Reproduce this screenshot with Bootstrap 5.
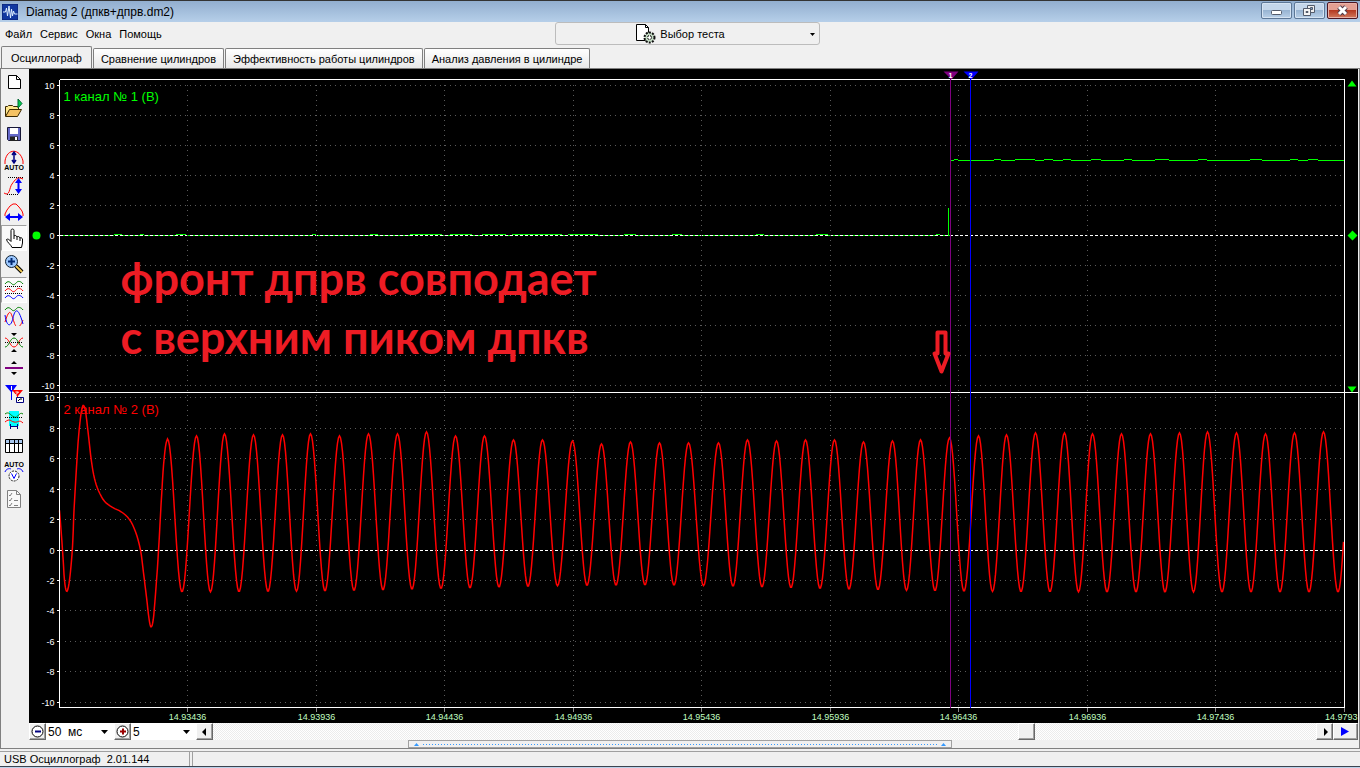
<!DOCTYPE html>
<html lang="ru">
<head>
<meta charset="utf-8">
<meta name="viewport" content="width=device-width, initial-scale=1">
<title>Diamag 2 (дпкв+дпрв.dm2)</title>
<link rel="stylesheet" href="https://cdn.jsdelivr.net/npm/bootstrap@5.3.0/dist/css/bootstrap.min.css">
<style>
:root { --face: #f0f0f0; --shade: #808080; }
body { font-family: "Liberation Sans", Arial, sans-serif; font-size: 11px; line-height: 14px; color: #000; background: var(--face); }
button, select { font: inherit; color: inherit; border-radius: 0; }
svg { display: block; }
.titlebar { height: 22px; padding: 0 2px; border-top: 1px solid #333; background: linear-gradient(#92aecf, #b6cfe9); font-size: 12px; }
.win-btns { gap: 2px; margin-bottom: 2px; }
.win-btn { width: 31px; height: 17px; padding: 0; border: 1px solid #5d7796; border-radius: 2px; background: linear-gradient(#c4d6ea 45%, #98b4d2 50%, #b9d0e8); box-shadow: inset 0 0 0 1px #d5e3f2; }
.win-close { border-color: #4c1622; background: linear-gradient(#e3a093 45%, #b53a22 50%, #d27a5e); box-shadow: inset 0 0 0 1px #e8b2a8; }
.menubar { display: grid; grid-template-columns: 555fr 265px 540fr; height: 24px; }
.menubar nav { padding-left: 5px; gap: 8px; }
.menubar a { color: #000; text-decoration: none; }
.test-btn { height: 23px; padding: 0 14px 0 0; border: 1px solid #bcbcbc; border-radius: 3px; background: var(--face); position: relative; }
.test-btn .arrow { position: absolute; right: 4px; top: 10px; }
.tabs { height: 22px; padding-left: 1px; border: 0; flex-wrap: nowrap; gap: 1px; }
.tabs .nav-link { height: 20px; padding: 0 7px; border: 1px solid var(--shade); border-bottom: 0; border-radius: 2px 2px 0 0; margin: 0; color: #000; background: linear-gradient(#fff, #e8e8e8); white-space: nowrap; line-height: 18px; }
.tabs .nav-link:hover { border-color: var(--shade); }
.tabs .nav-link.active { height: 23px; padding: 0 9px; border-color: var(--shade); background: var(--face); color: #000; margin-bottom: -1px; line-height: 20px; }
.pane { border: 1px solid var(--shade); min-height: 0; }
.work { min-height: 0; }
.toolbox { width: 28px; }
.tool { width: 26px; height: 26px; padding: 2px; border: 1px solid transparent; background: none; }
.tool.pressed { border-color: #a0a0a0 #fff #fff #a0a0a0; background: #fafafa; }
.scope { background: #000; min-height: 0; min-width: 0; margin-right: 1px; overflow: hidden; }
.scope svg { width: 100%; height: 100%; }
.scope text { font-family: "Liberation Sans", Arial, sans-serif; }
.t-axis { font-size: 9px; fill: #fff; text-anchor: end; }
.t-time { font-size: 9px; fill: #c0ffc0; text-anchor: middle; }
.t-time.t-last { text-anchor: end; }
.t-chan { font-size: 13px; }
.t-flag { font-size: 7px; font-weight: bold; fill: #fff; text-anchor: middle; }
.scope .t-note { font-family: Lato, "Open Sans", sans-serif; font-weight: bold; font-size: 45px; fill: #ed1c24; }
.t-auto { font: bold 7px "Liberation Sans", sans-serif; text-anchor: middle; }
.control-row { height: 17px; margin: 0 1px 0 28px; background: #fff; }
.raised { height: 17px; width: 17px; flex: none; padding: 0; border: 1px solid; border-color: #fff #696969 #696969 #fff; box-shadow: inset -1px -1px #a0a0a0; background: var(--face); }
.play { width: 25px; }
.pick { height: 17px; width: 68px; padding: 0 2px; border: 0; appearance: none; font-size: 12px; background: #fff url("data:image/svg+xml,%3Csvg xmlns='http://www.w3.org/2000/svg' width='7' height='4'%3E%3Cpath d='M0 0h7L3.5 4z'/%3E%3C/svg%3E") no-repeat right 6px center; }
.pick-narrow { width: 65px; }
.track { background: repeating-conic-gradient(#fff 0 25%, #ececec 0 50%) 0 0 / 2px 2px; }
.thumb { margin-left: 73%; }
.splitter { width: 40%; height: 8px; border: 1px solid #a0a0a0; padding: 0 5px; }
.splitter span { height: 1px; margin: 0 4px; background: repeating-linear-gradient(90deg, #3399ff 0 1px, transparent 1px 3px); }
.statusbar { height: 15px; margin-top: 2px; border-top: 1px solid #a0a0a0; }
.status-cell { width: 190px; border-right: 1px solid #a0a0a0; }
.status-rest { border-left: 1px solid #a0a0a0; margin-left: 2px; }
.desktop-edge { height: 2px; border-top: 1px solid #3c4450; background: #bcd2ea; }
</style>
</head>
<body>
<div class="d-flex flex-column vh-100 overflow-hidden">
  <header class="titlebar d-flex align-items-center flex-shrink-0">
    <svg width="16" height="16" viewBox="0 0 16 16" class="me-2"><rect width="16" height="16" fill="#1238a0"/><path d="M0 0h16v16H0z" fill="none" stroke="#0a1e6c"/><path d="M1 8h2.500l1-4 1 8 1.500-10 1.500 12 1-9 1 7 1-5 1 3h3" fill="none" stroke="#dff0ff"/></svg>
    <span>Diamag 2 (дпкв+дпрв.dm2)</span>
    <div class="win-btns d-flex ms-auto">
      <button class="win-btn" aria-label="Свернуть"><svg width="29" height="15"><rect x="9.500" y="7.500" width="10" height="4" rx="1" fill="#fff" stroke="#535b6b"/></svg></button>
      <button class="win-btn" aria-label="Восстановить"><svg width="29" height="15"><path d="M12.500 2.500h7v7h-7z" fill="#eee" stroke="#535b6b"/><path d="M15.500 4.500h2v2h-2z" fill="#7da0c8" stroke="#535b6b"/><path d="M8.500 5.500h7v7h-7z" fill="#f4f4f4" stroke="#535b6b"/><path d="M11 8.500h2v1h-2z" fill="#7da0c8" stroke="#535b6b"/></svg></button>
      <button class="win-btn win-close" aria-label="Закрыть"><svg width="29" height="15"><path d="M11 4l7 7M18 4l-7 7" stroke="#4d3a48" stroke-width="5"/><path d="M11 4l7 7M18 4l-7 7" stroke="#fff" stroke-width="3"/></svg></button>
    </div>
  </header>

  <div class="menubar flex-shrink-0">
    <nav class="d-flex align-items-center">
      <a href="#">Файл</a><a href="#">Сервис</a><a href="#">Окна</a><a href="#">Помощь</a>
    </nav>
    <button class="test-btn d-flex align-items-center justify-content-center gap-1">
      <svg width="20" height="20" viewBox="0 0 20 20"><path d="M.5.5h9l3 3v13H.5z" fill="#fff" stroke="#000"/><path d="M9.500.5v3h3" fill="none" stroke="#000"/><circle cx="13.500" cy="13.500" r="5" fill="#c4dcc4" stroke="#111" stroke-width="2" stroke-dasharray="2 1.200"/><circle cx="13.500" cy="13.500" r="2" fill="#fff" stroke="#000" stroke-dasharray="2 1"/></svg>
      <span>Выбор теста</span>
      <svg class="arrow" width="5" height="3"><path d="M0 0h5L2.500 3z"/></svg>
    </button>
  </div>

  <ul class="nav nav-tabs tabs align-items-end flex-shrink-0" role="tablist">
    <li><button class="nav-link active" role="tab" aria-selected="true">Осциллограф</button></li>
    <li><button class="nav-link" role="tab">Сравнение цилиндров</button></li>
    <li><button class="nav-link" role="tab">Эффективность работы цилиндров</button></li>
    <li><button class="nav-link" role="tab">Анализ давления в цилиндре</button></li>
  </ul>

  <main class="pane d-flex flex-column flex-grow-1">
    <div class="work d-flex flex-grow-1">
      <div class="toolbox flex-shrink-0">
        <button class="tool" aria-label="Новый"><svg width="20" height="20"><path d="M4.500 3.500h8l4 4v9h-12z" fill="#fff" stroke="#000"/><path d="M12.500 3.500v4h4" fill="none" stroke="#000"/></svg></button>
        <button class="tool" aria-label="Открыть"><svg width="20" height="20"><path d="M1.500 18V8.500h2l1-1h4l1 1h5V11" fill="#ffe68c" stroke="#3a2800"/><path d="M1.500 18.500l4-7h12l-4 7z" fill="#f5c264" stroke="#3a2800"/><path d="M14 1v9l4-4.500z" fill="#00d050" stroke="#063"/></svg></button>
        <button class="tool" aria-label="Сохранить"><svg width="20" height="20"><path d="M3.500 3.500h13v13h-12l-1-1z" fill="#6468c8" stroke="#181838"/><path d="M6 4h8v6H6z" fill="#fff"/><path d="M6 12.500h8V17H6z" fill="#222"/><path d="M11 13h2v3h-2z" fill="#fff"/></svg></button>
        <button class="tool" aria-label="Авто по амплитуде"><svg width="20" height="20"><path d="M1 11C3-2 16-2 19 11v3M1 11v3" fill="none" stroke="red"/><path d="M10 3v9M8 5l2-3 2 3M8 10l2 3 2-3" fill="none" stroke="#000080" stroke-width="1.500"/><text x="10" y="20" class="t-auto">AUTO</text></svg></button>
        <button class="tool" aria-label="По вертикали"><svg width="20" height="20"><path d="M4 1.500h15M3 18.500h12" stroke="#000" stroke-dasharray="1 1"/><path d="M0 17c6 4 5-5 8-9s5-8 11-5" fill="none" stroke="red"/><path d="M14.500 4v12" stroke="#00f" stroke-width="2"/><path d="M11 7l3.500-5L18 7zM11 13l3.500 5 3.500-5z" fill="#00f"/></svg></button>
        <button class="tool" aria-label="По горизонтали"><svg width="20" height="20"><path d="M1 14v-2l2-4 3-4 3-2h3l3 3 3 4 1 3v2" fill="none" stroke="red"/><path d="M4 15h12" stroke="#00f" stroke-width="2"/><path d="M6 11v8l-5-4zM14 11v8l5-4z" fill="#00f"/></svg></button>
        <button class="tool pressed" aria-label="Рука"><svg width="20" height="20"><path d="M8 19.500c-1-3-5-5-5.500-8 1-1 3 0 4.500 2V2.500c0-2 3-2 3 0V8c1-1 2.500-.5 3 1 1-1 2.500-.5 3 1 1-.8 2 0 2.500 1v4l-1 4.500z" fill="#fff" stroke="#000"/><path d="M10 8v3m3-2v3m3-2v3" stroke="#000"/></svg></button>
        <button class="tool" aria-label="Масштаб"><svg width="20" height="20"><path d="M12 12l6 6" stroke="#000" stroke-width="4"/><path d="M12 12l6 6" stroke="#f0c850" stroke-width="2"/><circle cx="7.500" cy="7.500" r="6" fill="#9cc8ff" stroke="#123"/><path d="M4 7.500h7M7.500 4v7" stroke="#002870" stroke-width="2"/></svg></button>
        <button class="tool pressed" aria-label="Раздельно"><svg width="20" height="20" fill="none"><path d="M1 4c3-4 5-2 7 0s4-1 5-2 4-1 6 2" stroke="#008000"/><path d="M1 11c3-4 5-2 7 0s4-1 5-2 4-1 6 2" stroke="red"/><path d="M1 18c3-4 5-2 7 0s4-1 5-2 4-1 6 2" stroke="#00f"/><path d="M1 6.500h18M1 13.500h18" stroke="#000" stroke-dasharray="1 1"/></svg></button>
        <button class="tool" aria-label="Совместно"><svg width="20" height="20" fill="none"><path d="M1 4c3-4 5-2 7 0s4-1 5-2 4-1 6 2" stroke="#008000"/><path d="M1 16c5-16 6-9 9 0s6 5 9-2" stroke="red"/><path d="M1 9c2 13 6 12 8 3s5-12 10 6" stroke="#00f"/></svg></button>
        <button class="tool" aria-label="Наложить"><svg width="20" height="20" fill="none"><path d="M1 10.500h18" stroke="#000" stroke-dasharray="1 1"/><path d="M1 6c4 0 5 9 9 9s5-9 9-9" stroke="red"/><path d="M1 15c4 0 5-9 9-9s5 9 9 9" stroke="#008000"/><path d="M7 1h6l-3 3zM7 20h6l-3-3z" fill="#000"/></svg></button>
        <button class="tool" aria-label="Разделить"><svg width="20" height="20"><path d="M7 6h6l-3-3zM7 14h6l-3 3z"/><path d="M1 10h18" stroke="#800080" stroke-width="2"/></svg></button>
        <button class="tool" aria-label="Маркеры"><svg width="20" height="20"><path d="M1 1h12L8 8v8H7V8z" fill="#00f"/><path d="M8 6h11l-5 6v5h-1v-5z" fill="red"/><path d="M12.500 13.500h7v5h-7z" fill="#fff" stroke="#000080"/><path d="M14 17l2-2h2" fill="none" stroke="#000"/><path d="M7.500 2v4m4 2h3l-3 3" fill="none" stroke="#fff"/></svg></button>
        <button class="tool" aria-label="Участок"><svg width="20" height="20" fill="none"><path d="M5 1h10v15H5z" fill="#00ffff"/><path d="M1 4c4-3 5 1 9 3s5-6 9-3" stroke="#008000"/><path d="M1 7.500h18" stroke="#000" stroke-dasharray="1 1"/><path d="M1 12c5-4 5-1 9 0s5-3 9 1" stroke="red"/><path d="M6.500 14v5M13.500 14v5M6 16.500h8" stroke="#000080"/></svg></button>
        <button class="tool" aria-label="Таблица"><svg width="20" height="20"><path d="M1.500 3.500h17v13h-17z" fill="#fff" stroke="#000"/><path d="M2 4h16v3H2z" fill="#a8c8f0"/><path d="M2 7.500h16M5.500 4v12M10.500 4v12M14.500 4v12" stroke="#000"/></svg></button>
        <button class="tool" aria-label="Авто измерение"><svg width="20" height="20"><text x="10" y="5" class="t-auto">AUTO</text><circle cx="10" cy="14" r="5" fill="#fff" stroke="#222" stroke-dasharray="2 1"/><path d="M7.500 11.500l2.500 5 2.500-5M1 10c1-3 4-4 6-3M19 10c-1-3-4-4-6-3" fill="none" stroke="#00f"/></svg></button>
        <button class="tool" aria-label="Протокол"><svg width="20" height="20" fill="none" stroke="#808080"><path d="M3.500 2.500h9l4 4v13h-13z" fill="#f8f8f8"/><path d="M12.500 2.500v4h4M5 7l1 1 2-3M5 12l1 1 2-3M5 17l1 1 2-3M10 12.500h4M10 17.500h4"/></svg></button>
      </div>
      <div class="scope flex-grow-1" id="scope"></div>
    </div>

    <div class="control-row d-flex flex-shrink-0">
      <button class="raised" aria-label="Уменьшить"><svg width="15" height="15"><circle cx="7.500" cy="7.500" r="5.500" fill="#fff" stroke="#000"/><path d="M5 7.500h6" stroke="#000080" stroke-width="2"/></svg></button>
      <select class="pick" aria-label="Развертка"><option>50 &nbsp;мс</option></select>
      <button class="raised" aria-label="Увеличить"><svg width="15" height="15"><circle cx="7.500" cy="7.500" r="5.500" fill="#fff" stroke="#000"/><path d="M5 7.500h6M8 4.500v6" stroke="#900" stroke-width="2"/></svg></button>
      <select class="pick pick-narrow" aria-label="Масштаб по вертикали"><option>5</option></select>
      <button class="raised" aria-label="Влево"><svg width="15" height="15"><path d="M9 4v8L5 8z"/></svg></button>
      <div class="track flex-grow-1" role="scrollbar" aria-controls="scope" aria-valuenow="74"><div class="raised thumb"></div></div>
      <button class="raised" aria-label="Вправо"><svg width="15" height="15"><path d="M7 4v8l4-4z"/></svg></button>
      <button class="raised play" aria-label="Пуск"><svg width="22" height="15"><path d="M7 3v9l8-4.500z" fill="#00f"/></svg></button>
    </div>
    <div class="splitter d-flex align-items-center mx-auto flex-shrink-0">
      <svg width="5" height="3"><path d="M0 3h5L2.500 0z" fill="#39f"/></svg><span class="flex-grow-1"></span><svg width="5" height="3"><path d="M0 3h5L2.500 0z" fill="#39f"/></svg>
    </div>
  </main>

  <footer class="statusbar d-flex flex-shrink-0">
    <div class="status-cell ps-1 flex-shrink-0">USB Осциллограф &nbsp;2.01.144</div>
    <div class="status-rest flex-grow-1"></div>
  </footer>
  <div class="desktop-edge flex-shrink-0"></div>
</div>
<script src="https://cdn.jsdelivr.net/npm/bootstrap@5.3.0/dist/js/bootstrap.bundle.min.js"></script>
<script>
// Time axis labels; the last division falls on the right frame edge.
const times = ['14.93436','14.93936','14.94436','14.94936','14.95436','14.95936','14.96436','14.96936','14.97436'];
// Crankshaft sensor: samples [time, volts] up to the first regular tooth.
const gap = [[0,2.6],[3,0],[5,-2],[7,-2.7],[9,-2.4],[11,-1.4],[13,.2],[14.5,2.6],[16.5,4.9],[18.5,7],[21,8.7],[23.5,9.5],[26,9.1],[28.5,7.8],[32,5.8],[35,4.7],[39,3.9],[45,3.2],[53,2.8],[62,2.5],[70,2],[76,1.2],[81,0],[84,-1.5],[87,-3.1],[89.5,-4.5],[91.5,-5.05],[93.7,-4.6],[96,-2.9],[98.5,-.6],[101,2.3],[103.5,5.1],[106,6.8],[108,7.3]];
const peakX = [168,197,225,254,283,311,340,369,398,427,456,485,514,543,573,602,631,660,689,719,748,777,806,835,864,893,921,950,979,1007,1036,1065,1093,1122,1151,1180,1208,1237,1266,1295,1324,1353];
const peakY = [439,436,434,435,435,434,436,434,434,432,436,436,440,440,441,444,442,443,443,443,440,441,440,440,442,441,440,438,436,435,433,433,434,434,434,433,432,433,434,433,432,433];
// Camshaft sensor: single-step noise as [start, width].
const lowNoise = [[54,8],[80,4],[116,10],[252,4],[310,8],[350,32],[390,22],[422,24],[452,50],[508,30],[564,12],[612,10],[696,8],[756,12],[876,4]];
const highNoise = [[894,4],[934,7],[955,20],[984,9],[1003,8],[1031,10],[1064,8],[1095,14],[1138,9],[1190,12],[1230,8],[1248,10]];

// Catmull-Rom interpolation of a sample list.
function smooth(p, n = 4) {
  const out = [];
  for (let i = 0; i < p.length - 1; i++) {
    const a = p[i - 1] || p[i], b = p[i], c = p[i + 1], d = p[i + 2] || c;
    for (let k = 0; k < n; k++) {
      const t = k / n;
      out.push([0, 1].map(j => .5 * (2 * b[j] + (c[j] - a[j]) * t + (2 * a[j] - 5 * b[j] + 4 * c[j] - d[j]) * t * t + (3 * b[j] - a[j] - 3 * c[j] + d[j]) * t * t * t)));
    }
  }
  return out;
}

function draw() {
  const box = document.getElementById('scope'), W = box.clientWidth, H = box.clientHeight;
  const L = 30.5, R = W - 13.5, T = 10.5, B = H - 15.5, M = Math.floor((T + B) / 2 - 1) + .5;
  const sx = (R - L) / 1285, z1 = (T + M) / 2 - .5, z2 = (M + B) / 2;
  const u1 = (M - T) / 20.8, u2 = (B - M) / 20.7;
  const px = x => L + x * sx, snap = v => Math.floor(v) + .5;
  let s = '';
  const line = (x1, y1, x2, y2, c, e = '') => s += `<path d="M${x1} ${y1}L${x2} ${y2}" stroke="${c}" ${e} fill="none" shape-rendering="crispEdges"/>`;
  const text = (x, y, t, c, e = '') => s += `<text x="${x}" y="${y}" class="${c}" ${e}>${t}</text>`;

  // Noisy level: the trace itself steps up by one pixel over each noise span.
  const level = (x1, x2, y, noise) => {
    let d = `M${x1} ${y}`, x = x1;
    for (const [a, w] of noise) {
      d += `H${px(a)}M${px(a)} ${y - 1}H${px(a + w)}M${px(a + w)} ${y}`;
      x = px(a + w);
    }
    s += `<path d="${d}H${x2}" stroke="#0f0" fill="none" shape-rendering="crispEdges"/>`;
  };

  level(L, px(890), snap(z1), lowNoise);
  for (const [z, u] of [[z1, u1], [z2, u2]])
    for (let v = -10; v <= 10; v += 2) {
      const y = snap(z - v * u);
      v ? line(L + 5, y, R, y, '#5a5a5a', 'stroke-dasharray="1 4"') : line(L, y, R, y, '#fff', 'stroke-dasharray="3 2"');
      line(L - 3, y, L, y, '#fff');
      text(L - 5, y + 3, v, 't-axis');
    }
  times.forEach((t, i) => {
    const x = snap(px(128 + i * 128.5));
    line(x, T + 5, x, B, '#5a5a5a', 'stroke-dasharray="1 4"');
    line(x, B, x, B + 4, '#888');
    text(x, B + 12, t, 't-time');
  });
  line(R, B, R, B + 4, '#888');
  text(R + 13, B + 12, '14.9793', 't-time t-last');

  text(L + 4, T + 21, '1 канал № 1 (В)', 't-chan', 'fill="#0f0"');
  text(L + 4, M + 21, '2 канал № 2 (В)', 't-chan', 'fill="#f00"');

  const low = snap(z1), high = snap(z1 - 5 * u1);
  line(px(889), low, px(889), low - 28, '#0f0');
  line(px(891), high + 11, px(891), high, '#0f0');
  level(px(891), R, high, highNoise);

  // Regular teeth: raised cosines between successive extremes.
  const volt = y => (550 - y) / 15.2, pts = smooth(gap);
  for (let i = 0; i < peakX.length - 1; i++) {
    const a = peakX[i] - 60, b = peakX[i + 1] - 60;
    const top = volt(peakY[i]), next = volt(peakY[i + 1]);
    const trough = volt(592 - 7 * Math.exp(-Math.pow((a - 560) / 230, 2)));
    for (let x = a; x < b && x <= 1284; x++) {
      const k = (1 + Math.cos(2 * Math.PI * (x - a) / (b - a))) / 2;
      pts.push([x, trough + ((x - a < (b - a) / 2 ? top : next) - trough) * k]);
    }
  }
  s += `<polyline fill="none" stroke="#f00" stroke-width="1.500" points="${pts.map(p => px(p[0]).toFixed(1) + ',' + (z2 - p[1] * u2).toFixed(1)).join(' ')}"/>`;

  line(L, T, R, T, '#fff'); line(L, T, L, B, '#fff'); line(R, T, R, B, '#fff'); line(L, B, R, B, '#fff');
  line(0, M, W, M, '#fff');

  [[891, '#800080', 1], [911, '#0000ff', 2]].forEach(([a, c, n]) => {
    const x = snap(px(a) - .5);
    line(x, T - 4, x, B, c);
    s += `<path d="M${x - 7} ${T - 8}h15l-7 8z" fill="${c}"/>`;
    text(x, T - 2, n, 't-flag');
  });
  s += `<path d="M${R + 3} ${T + 7}h9l-4.500-6zM${R + 3} ${M - 6}h9l-4.500 6zM${R + 3} ${z1}l5-5 5 5-5 5z" fill="#0f0"/><circle cx="7.500" cy="${z1}" r="4" fill="#0f0"/>`;

  text(px(61), z1 + 59, 'фронт дпрв совподает', 't-note');
  text(px(61), z1 + 118, 'с верхним пиком дпкв', 't-note');
  s += `<path d="M${px(878)} ${z1 + 97}h8v21h3l-7 18-7-18h3z" fill="none" stroke="#ed1c24" stroke-width="4" stroke-linejoin="round"/>`;
  box.innerHTML = `<svg role="img" aria-label="Осциллограмма">${s}</svg>`;
}
draw();
addEventListener('resize', draw);
</script>
</body>
</html>
